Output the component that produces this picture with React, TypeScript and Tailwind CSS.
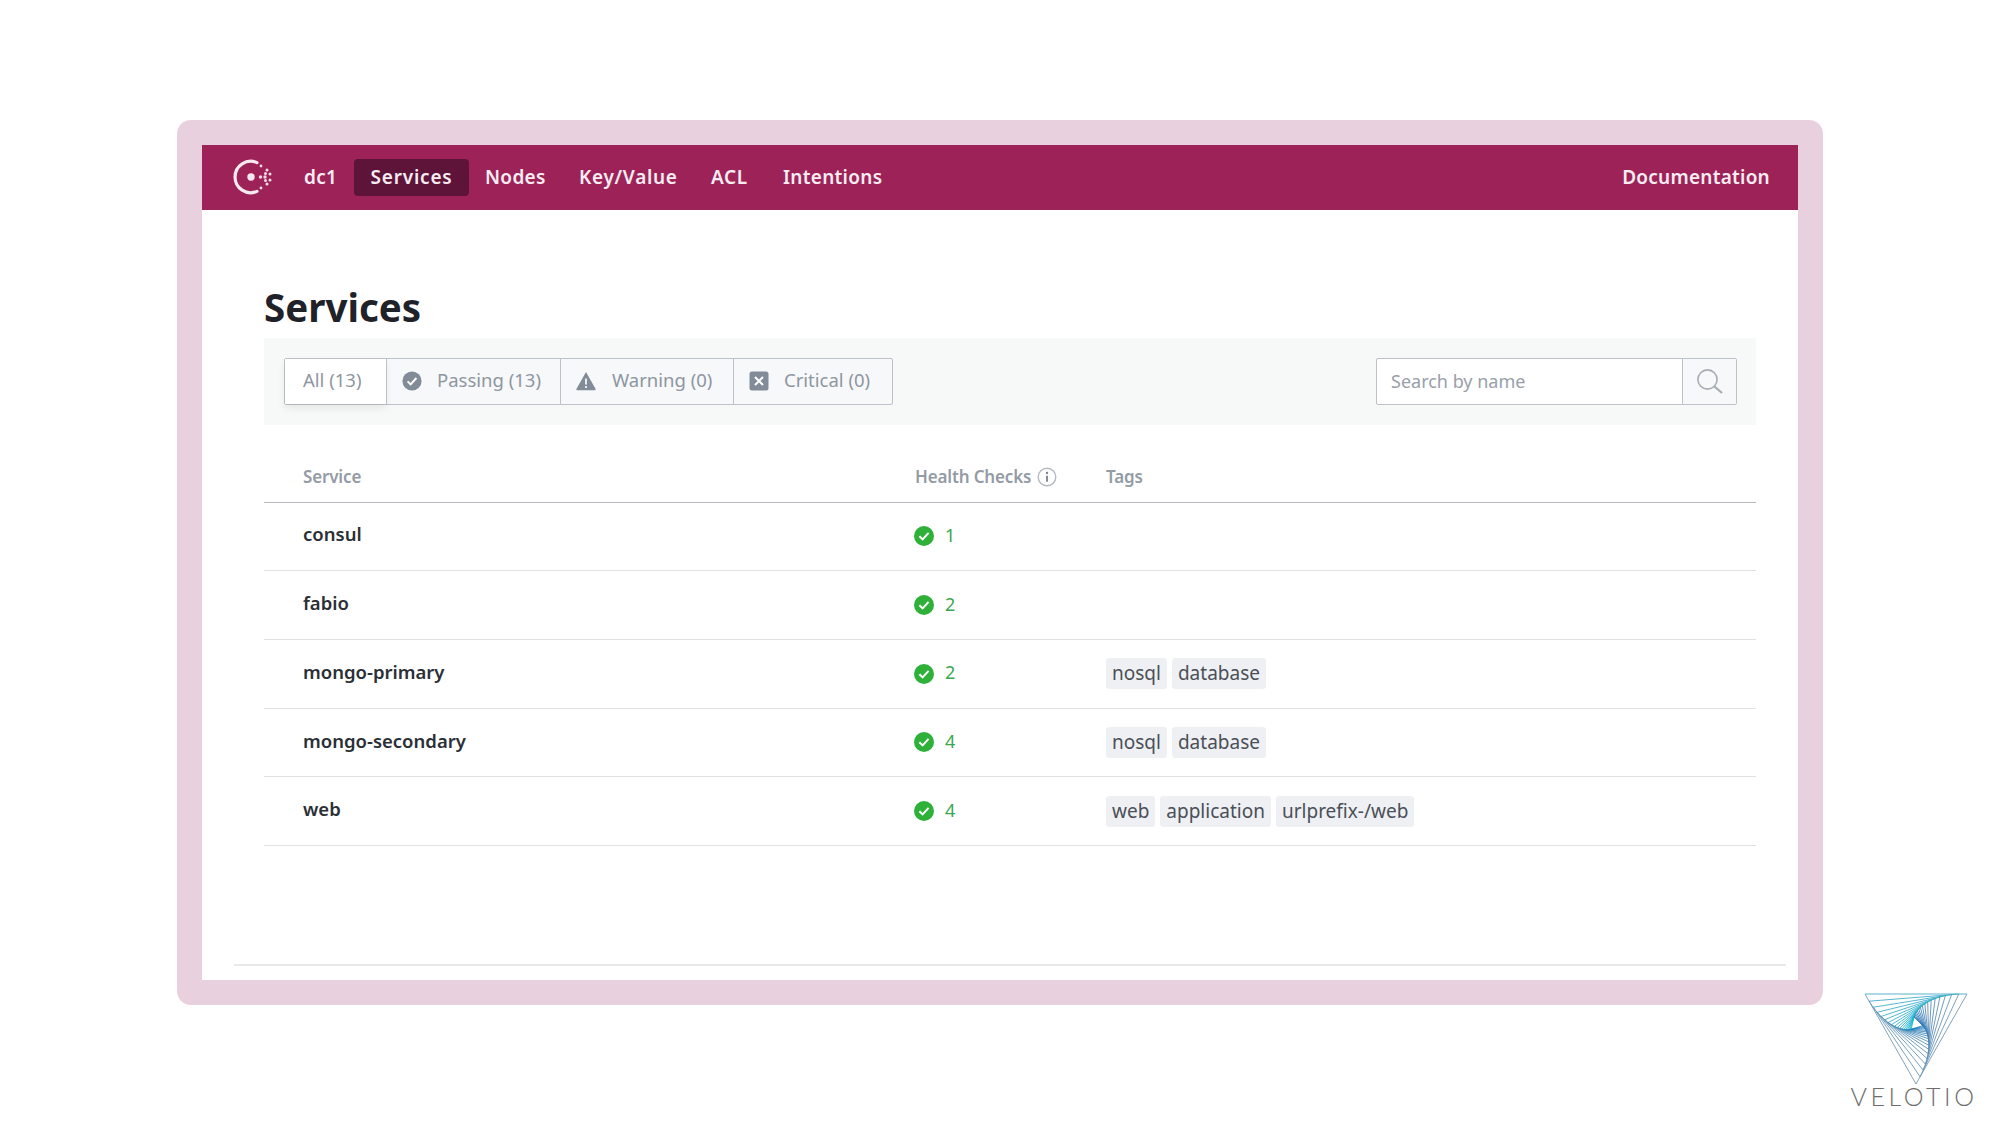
const font = "font-['Noto_Sans','Open_Sans',sans-serif]";

const navItems = [
	{ label: "dc1", className: "w-[32px] ml-[34px] tracking-[0.3px]" },
	{ label: "Services", className: "ml-[18px] w-[115px] h-[37px] rounded-[4px] bg-[#5e1338] justify-center tracking-[0.8px]" },
	{ label: "Nodes", className: "ml-[16px] w-[61px] tracking-[0.3px]" },
	{ label: "Key/Value", className: "ml-[33px] w-[98px] tracking-[0.7px]" },
	{ label: "ACL", className: "ml-[34px] w-[38px] tracking-[0.6px]" },
	{ label: "Intentions", className: "ml-[34px] w-[100px] tracking-[0.3px]" },
];

const services = [
	{ name: "consul", checks: 1, tags: [] as string[] },
	{ name: "fabio", checks: 2, tags: [] as string[] },
	{ name: "mongo-primary", checks: 2, tags: ["nosql", "database"] },
	{ name: "mongo-secondary", checks: 4, tags: ["nosql", "database"] },
	{ name: "web", checks: 4, tags: ["web", "application", "urlprefix-/web"] },
];

function ConsulLogo() {
	const dots = [
		[35, 22, 1.7],
		[30.5, 22, 1.7],
		[37, 15, 1.5],
		[40, 19, 1.5],
		[40, 25, 1.5],
		[37, 29, 1.5],
		[35.5, 18.5, 1.5],
		[35.5, 25.5, 1.5],
		[31, 11, 1.4],
		[31, 33, 1.4],
	];
	return (
		<svg width="44" height="44" viewBox="0 0 44 44" fill="none">
			<path d="M27 7.6A15.7 15.7 0 1 0 27 36.4" stroke="#f8e9f0" strokeWidth="3.2" strokeLinecap="round" />
			<circle cx="21" cy="22" r="3.7" fill="#f8e9f0" />
			{dots.map(([x, y, r]) => (
				<circle key={`${x}-${y}`} cx={x} cy={y} r={r} fill="#f3dbe6" />
			))}
		</svg>
	);
}

function GrayCheck() {
	return (
		<svg width="20" height="20" viewBox="0 0 20 20">
			<circle cx="10" cy="10" r="9.6" fill="#828c99" />
			<path d="M5.6 10.4l3 3 5.8-6.4" fill="none" stroke="#fff" strokeWidth="2" />
		</svg>
	);
}

function GrayWarning() {
	return (
		<svg width="20" height="20" viewBox="0 0 20 20">
			<path d="M10 1L19.6 18a.8.8 0 0 1-.7 1.2H1.1a.8.8 0 0 1-.7-1.2z" fill="#828c99" />
			<path d="M10 7.5v6M10 15v2" stroke="#f4f6f8" strokeWidth="1.8" />
		</svg>
	);
}

function GrayCritical() {
	return (
		<svg width="20" height="20" viewBox="0 0 20 20">
			<rect x="0.5" y="0.5" width="19" height="19" rx="2.5" fill="#828c99" />
			<path d="M6 6l8 8M14 6l-8 8" stroke="#fff" strokeWidth="2" />
		</svg>
	);
}

function GreenCheck() {
	return (
		<svg width="20" height="20" viewBox="0 0 20 20">
			<circle cx="10" cy="10" r="10" fill="#2eb039" />
			<path d="M5.4 10.2l3.2 3.2 6-6.6" fill="none" stroke="#fff" strokeWidth="2" />
		</svg>
	);
}

function InfoIcon() {
	return (
		<svg width="20" height="20" viewBox="0 0 20 20" fill="none">
			<circle cx="10" cy="10" r="8.8" stroke="#b4bac2" strokeWidth="1.4" />
			<path d="M10 8.8v6" stroke="#7f8792" strokeWidth="1.9" />
			<circle cx="10" cy="6" r="1.2" fill="#7f8792" />
		</svg>
	);
}

function SearchIcon() {
	return (
		<svg width="27" height="25" viewBox="0 0 27 25" fill="none" stroke="#a6acb4">
			<circle cx="11.5" cy="10.5" r="9.6" strokeWidth="1.6" />
			<path d="M18.5 17.5L26 24" strokeWidth="2.2" />
		</svg>
	);
}

const ramp = (from: number[], to: number[], k: number) =>
	`rgb(${from.map((v, i) => Math.round(v + (to[i] - v) * k)).join(",")})`;

// nested triangles, each one turned a little inside the last
function VelotioMark() {
	const lines: { x1: number; y1: number; x2: number; y2: number; color: string }[] = [];
	let a = [1, 1];
	let b = [103, 1];
	let c = [52, 91];
	const t = 0.08;
	const steps = 18;
	const mix = (p: number[], q: number[]) => [p[0] + t * (q[0] - p[0]), p[1] + t * (q[1] - p[1])];
	for (let i = 0; i < steps; i++) {
		const k = i / (steps - 1);
		const colors = [
			ramp([58, 168, 196], [20, 181, 207], k),
			ramp([106, 147, 176], [31, 111, 184], k),
			ramp([106, 147, 176], [31, 127, 192], k),
		];
		const tri = [a, b, c];
		tri.forEach((p, j) => {
			const q = tri[(j + 1) % 3];
			lines.push({ x1: p[0], y1: p[1], x2: q[0], y2: q[1], color: colors[j] });
		});
		const na = mix(a, c);
		const nb = mix(b, a);
		const nc = mix(c, b);
		a = na;
		b = nb;
		c = nc;
	}
	return (
		<svg width="104" height="92" viewBox="0 0 104 92" fill="none">
			{lines.map((l, i) => (
				<line key={i} x1={l.x1} y1={l.y1} x2={l.x2} y2={l.y2} stroke={l.color} strokeWidth="0.85" />
			))}
		</svg>
	);
}

export default function App() {
	return (
		<div className={`w-[2000px] h-[1125px] bg-white overflow-hidden pt-[120px] ${font}`}>
			{/* Pink frame */}
			<div className="ml-[177px] w-[1646px] h-[885px] rounded-[14px] bg-[#e9d0de] px-[25px] pt-[24.5px] pb-[25px]">
				<div className="h-full bg-white flex flex-col">
					{/* Nav */}
					<div className="h-[65px] bg-[#9d2257] flex items-center pl-[30px] pr-[28px] text-[#f9edf3] text-[19px] font-semibold shrink-0">
						<div className="w-[40px] h-[44px] -ml-[2px]">
							<ConsulLogo />
						</div>
						{navItems.map((item) => (
							<div key={item.label} className={`flex items-center whitespace-nowrap ${item.className}`}>
								{item.label}
							</div>
						))}
						<div className="ml-auto tracking-[0.25px] whitespace-nowrap">Documentation</div>
					</div>

					{/* Content */}
					<div className="flex-1 flex flex-col pl-[62px] pr-[42px]">
						<h1 className="mt-[74px] h-[54px] text-[38.5px] leading-[46px] font-bold text-[#1f2229]">Services</h1>

						<div className="h-[87px] bg-[#f7f8f8] pl-[20px] pr-[19px] flex items-center justify-between">
							<div className="flex h-[47px] border border-[#bcc2c9] rounded-[2px] bg-[#f6f8fa] text-[18.5px] text-[#8e96a1]">
								<div className="w-[101px] flex items-center pl-[18px] pb-[2px] bg-white shadow-[0_4px_8px_rgba(0,0,0,0.08)]">All (13)</div>
								<div className="w-[174px] flex items-center gap-[15px] pl-[15px] border-l border-[#bcc2c9]">
									<GrayCheck />
									<span className="pb-[2px]">Passing (13)</span>
								</div>
								<div className="w-[173px] flex items-center gap-[16px] pl-[15px] border-l border-[#bcc2c9]">
									<GrayWarning />
									<span className="pb-[2px]">Warning (0)</span>
								</div>
								<div className="w-[159px] flex items-center gap-[15px] pl-[15px] border-l border-[#bcc2c9]">
									<GrayCritical />
									<span className="pb-[2px]">Critical (0)</span>
								</div>
							</div>
							<div className="flex h-[47px] w-[361px] border border-[#bcc2c9] rounded-[2px] bg-white">
								<div className="flex-1 flex items-center pl-[14px] text-[18px] text-[#98a0aa]">Search by name</div>
								<div className="w-[54px] flex items-center justify-center border-l border-[#bcc2c9] bg-[#f6f8fa]">
									<SearchIcon />
								</div>
							</div>
						</div>

						{/* Table */}
						<div className="flex items-center h-[78px] pt-[27px] border-b border-[#b5b8bd] text-[17px] font-semibold tracking-[-0.15px] text-[#939ba5]">
							<div className="w-[651px] pl-[39px]">Service</div>
							<div className="w-[191px] flex items-center gap-[6px]">
								Health Checks
								<InfoIcon />
							</div>
							<div>Tags</div>
						</div>
						{services.map((s) => (
							<div key={s.name} className="flex items-center h-[68.7px] border-b border-[#dfe1e4]">
								<div className="w-[651px] pl-[39px] pb-[4px] text-[18.5px] font-semibold text-[#2b2f36]">{s.name}</div>
								<div className="w-[191px] flex items-center gap-[11px] -ml-[1px] text-[18px] text-[#3aa850]">
									<GreenCheck />
									<span className="pb-[2px]">{s.checks}</span>
								</div>
								<div className="flex gap-[5px] ml-[1px] text-[19px] text-[#4a4f58]">
									{s.tags.map((tag) => (
										<span key={tag} className="h-[31px] px-[6px] flex items-center bg-[#eef0f3] rounded-[3px]">
											{tag}
										</span>
									))}
								</div>
							</div>
						))}

						<div className="mt-auto mb-[14px] -ml-[30px] -mr-[30px] border-b-2 border-[#e9e9ea]" />
					</div>
				</div>
			</div>

			{/* Velotio mark */}
			<div className="flex justify-end pr-[24px] mt-[-12px]">
				<div className="w-[124px] flex flex-col items-center">
					<div className="h-[91px] ml-[4px]">
						<VelotioMark />
					</div>
					<div className="font-['Lato',sans-serif] font-light text-[25px] leading-[24px] tracking-[3.6px] whitespace-nowrap text-[#6d6e70]">VELOTIO</div>
				</div>
			</div>
		</div>
	);
}
